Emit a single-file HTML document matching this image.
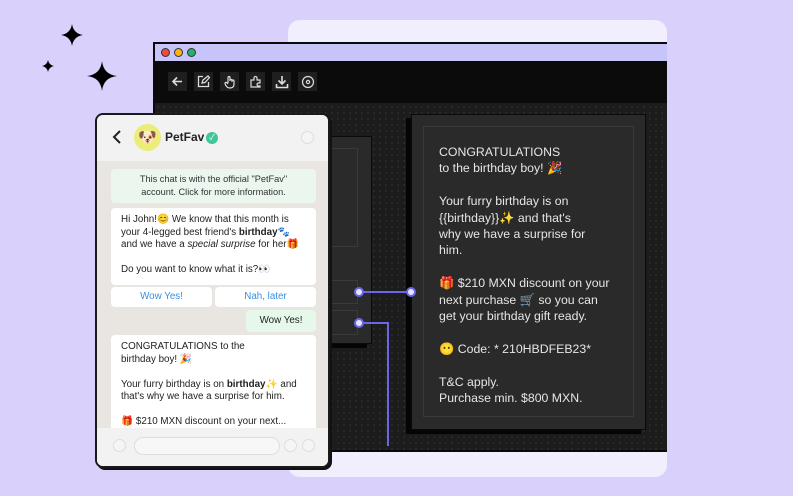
<!DOCTYPE html>
<html><head><meta charset="utf-8"><style>
*{margin:0;padding:0;box-sizing:border-box}
body{width:793px;height:496px;background:#d9d0fb;position:relative;overflow:hidden;font-family:"Liberation Sans","Noto Sans CJK JP",sans-serif}
.abs{position:absolute}
.panel{left:288px;top:20px;width:379px;height:457px;background:#f1eefd;border-radius:12px}
.win{left:153px;top:42px;width:514px;height:410px;background:#1d1d1d;border:2px solid #0a0a0a;border-right:none;
background-image:radial-gradient(#2c2c2c 0.8px,transparent 1px);background-size:6px 6px;background-color:#1c1c1c}
.title{left:0;top:0;width:100%;height:19px;background:#c6c4f9;border-bottom:2px solid #0a0a0a}
.dot{position:absolute;top:4px;width:9px;height:9px;border-radius:50%;border:1px solid #333}
.tool{left:0;top:19px;width:100%;height:40px;background:#0b0b0b}
.ic{position:absolute;top:9px;width:19px;height:19px;background:#1f1f1f;display:flex;align-items:center;justify-content:center}
.card{background:#2a2a2a;border:1px solid #0a0a0a;box-shadow:-5px 4px 0 #050505}
.text{color:#e6e6e6;font-size:12.3px;line-height:16.4px}
.phone{left:95px;top:113px;width:235px;height:355px;background:#e9e6e1;border:2px solid #1a1a1a;border-radius:8px;overflow:hidden;box-shadow:2px 2px 0 #111}
.b{background:#fff;border-radius:4px;font-size:9.8px;line-height:12.5px;color:#222;position:absolute}
.circ{position:absolute;border-radius:50%;border:1px solid #ddd;background:#f5f5f5}
</style></head><body>
<svg class="abs" style="left:0;top:0" width="130" height="100">
<path fill="#000" d="M72 24 Q73.5 33.5 83 35 Q73.5 36.5 72 46 Q70.5 36.5 61 35 Q70.5 33.5 72 24Z"/>
<path fill="#000" d="M48 60 Q49 65 54 66 Q49 67 48 72 Q47 67 42 66 Q47 65 48 60Z"/>
<path fill="#000" d="M102 61 Q103.5 74.5 117 76 Q103.5 77.5 102 91 Q100.5 77.5 87 76 Q100.5 74.5 102 61Z"/>
</svg>
<div class="abs panel"></div>
<div class="abs win">
 <div class="abs title">
  <div class="dot" style="left:6px;background:#f04a3c"></div>
  <div class="dot" style="left:19px;background:#f4b41a"></div>
  <div class="dot" style="left:32px;background:#1fb36b"></div>
 </div>
 <div class="abs tool">
  <div class="ic" style="left:13px"><svg width="13" height="13" viewBox="0 0 13 13" fill="none" stroke="#ddd" stroke-width="1.6"><path d="M11 6.5H2M6 2.5L2 6.5 6 10.5"/></svg></div>
  <div class="ic" style="left:39px"><svg width="13" height="13" viewBox="0 0 13 13" fill="none" stroke="#ddd" stroke-width="1.3"><path d="M6 1.5H1.5v10h10V7M5 8l1-3 5-4 1.5 1.5-4.5 5z"/></svg></div>
  <div class="ic" style="left:65px"><svg width="14" height="14" viewBox="0 0 14 14" fill="none" stroke="#ddd" stroke-width="1.2"><path d="M5 8V2.5a1 1 0 012 0V6M7 5.5a1 1 0 012 0V7M9 6a1 1 0 012 0v3c0 2.5-1.5 4-4 4s-3-1-4.5-3L2 8.5a1 1 0 011.5-1L5 9"/></svg></div>
  <div class="ic" style="left:91px"><svg width="14" height="14" viewBox="0 0 14 14" fill="none" stroke="#ddd" stroke-width="1.2"><path d="M2 12V5h3V3a1.5 1.5 0 013 0v2h3v3h-1.5a1.5 1.5 0 000 3H11v1z"/></svg></div>
  <div class="ic" style="left:117px"><svg width="14" height="14" viewBox="0 0 14 14" fill="none" stroke="#ddd" stroke-width="1.6"><path d="M7 1v8M3.5 5.5L7 9l3.5-3.5M1.5 9v3.5h11V9"/></svg></div>
  <div class="ic" style="left:143px"><svg width="14" height="14" viewBox="0 0 14 14" fill="none" stroke="#ddd" stroke-width="1.2"><circle cx="7" cy="7" r="5.5"/><circle cx="7" cy="7" r="1.6"/></svg></div>
 </div>
</div>
<div class="abs card" style="left:318px;top:136px;width:54px;height:208px"></div>
<div class="abs" style="left:325px;top:148px;width:33px;height:99px;border:1px solid #3a3a3a"></div>
<div class="abs" style="left:325px;top:280px;width:33px;height:24px;border:1px solid #3a3a3a"></div>
<div class="abs" style="left:325px;top:310px;width:33px;height:25px;border:1px solid #3a3a3a"></div>
<div class="abs card" style="left:411px;top:114px;width:235px;height:316px"></div>
<div class="abs" style="left:423px;top:126px;width:211px;height:291px;border:1px solid #3a3a3a"></div>
<div class="abs text" style="left:439px;top:144px;width:182px">CONGRATULATIONS<br>to the birthday boy! 🎉<br><br>Your furry birthday is on<br>{{birthday}}✨ and that's<br>why we have a surprise for<br>him.<br><br>🎁 $210 MXN discount on your<br>next purchase 🛒 so you can<br>get your birthday gift ready.<br><br>😶 Code: * 210HBDFEB23*<br><br>T&amp;C apply.<br>Purchase min. $800 MXN.</div>
<svg class="abs" style="left:0;top:0" width="793" height="496">
<path d="M359 292H411M359 323H388V446" stroke="#6b66e6" stroke-width="2" fill="none"/>
<g fill="#e8e6ff" stroke="#6b66e6" stroke-width="2"><circle cx="359" cy="292" r="4"/><circle cx="411" cy="292" r="4"/><circle cx="359" cy="323" r="4"/></g>
</svg>
<div class="abs phone">
 <div class="abs" style="left:0;top:0;width:100%;height:46px;background:#f2f2f2"></div>
 <svg class="abs" style="left:14px;top:14px" width="12" height="16"><path d="M9 2L3 8l6 6" stroke="#222" stroke-width="2" fill="none"/></svg>
 <div class="abs" style="left:37px;top:9px;width:27px;height:27px;border-radius:50%;background:#ecec7a;text-align:center;font-size:15px;line-height:27px">🐶</div>
 <div class="abs" style="left:68px;top:15px;font-size:12px;font-weight:bold;color:#222">PetFav</div>
 <div class="abs" style="left:109px;top:17px;width:12px;height:12px;border-radius:50%;background:#3fc59a;color:#fff;font-size:8px;text-align:center;line-height:12px">✓</div>
 <div class="circ" style="left:204px;top:16px;width:13px;height:13px"></div>
 <div class="b" style="left:14px;top:54px;width:205px;height:34px;background:#eaf6ee;text-align:center;padding-top:4px;font-size:9.2px;color:#333">This chat is with the official "PetFav"<br>account. Click for more information.</div>
 <div class="b" style="left:14px;top:93px;width:205px;height:77px;padding:6px 10px">Hi John!😊 We know that this month is<br>your 4-legged best friend's <b>birthday</b>🐾<br>and we have a <i>special surprise</i> for her🎁<br><br>Do you want to know what it is?👀</div>
 <div class="b" style="left:14px;top:172px;width:101px;height:20px;text-align:center;line-height:20px;color:#3a8ee0">Wow Yes!</div>
 <div class="b" style="left:118px;top:172px;width:101px;height:20px;text-align:center;line-height:20px;color:#3a8ee0">Nah, later</div>
 <div class="b" style="left:149px;top:195px;width:70px;height:22px;background:#e6f8ea;text-align:center;line-height:22px">Wow Yes!</div>
 <div class="b" style="left:14px;top:220px;width:205px;height:100px;padding:6px 10px;border-radius:4px 4px 0 0">CONGRATULATIONS to the<br>birthday boy! 🎉<br><br>Your furry birthday is on <b>birthday</b>✨ and<br>that's why we have a surprise for him.<br><br>🎁 $210 MXN discount on your next...</div>
 <div class="abs" style="left:0;top:313px;width:100%;height:42px;background:#f2f2f2"></div>
 <div class="circ" style="left:16px;top:324px;width:13px;height:13px"></div>
 <div class="abs" style="left:37px;top:322px;width:146px;height:18px;border-radius:9px;border:1px solid #ddd;background:#f7f7f7"></div>
 <div class="circ" style="left:187px;top:324px;width:13px;height:13px"></div>
 <div class="circ" style="left:205px;top:324px;width:13px;height:13px"></div>
</div>
</body></html>
